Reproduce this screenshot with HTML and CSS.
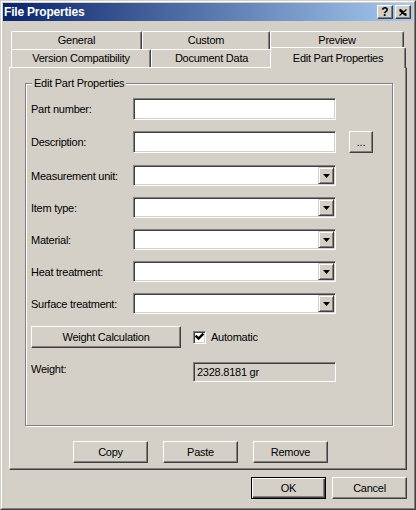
FILE: index.html
```html
<!DOCTYPE html>
<html>
<head>
<meta charset="utf-8">
<title>File Properties</title>
<link rel="stylesheet" href="styles.css">
</head>
<body>
<div class="window">
  <div class="window-inner">
    <div class="titlebar">
      <span class="title">File Properties</span>
      <div class="caption-btns">
        <div class="cap-btn cap-help">?</div>
        <div class="cap-btn cap-close">
          <svg width="8" height="7" viewBox="0 0 8 7"><path d="M0.5 0.5 L7.5 6.5 M1.5 0.5 L7.5 5.5 M0.5 1.5 L6.5 6.5 M7.5 0.5 L0.5 6.5" stroke="#000" stroke-width="1.1" fill="none"/></svg>
        </div>
      </div>
    </div>
    <div class="dialog-body">
      <div class="tabs">
        <div class="tabrow back">
          <div class="tab t-general">General</div>
          <div class="tab t-custom">Custom</div>
          <div class="tab t-preview">Preview</div>
        </div>
        <div class="tabrow front">
          <div class="tab t-version">Version Compatibility</div>
          <div class="tab t-docdata">Document Data</div>
          <div class="tab t-edit selected">Edit Part Properties</div>
        </div>
      </div>
      <div class="panel">
        <div class="group">
          <span class="group-title">Edit Part Properties</span>
          <div class="row r-part">
            <span class="label">Part number:</span>
            <div class="edit"></div>
          </div>
          <div class="row r-desc">
            <span class="label">Description:</span>
            <div class="edit"></div>
            <button class="btn btn-dots">...</button>
          </div>
          <div class="row r-combo r-first-combo">
            <span class="label">Measurement unit:</span>
            <div class="combo"><div class="combo-btn"><svg width="7" height="4" viewBox="0 0 7 4"><path d="M0 0 H7 L3.5 4 Z" fill="#000"/></svg></div></div>
          </div>
          <div class="row r-combo">
            <span class="label">Item type:</span>
            <div class="combo"><div class="combo-btn"><svg width="7" height="4" viewBox="0 0 7 4"><path d="M0 0 H7 L3.5 4 Z" fill="#000"/></svg></div></div>
          </div>
          <div class="row r-combo">
            <span class="label">Material:</span>
            <div class="combo"><div class="combo-btn"><svg width="7" height="4" viewBox="0 0 7 4"><path d="M0 0 H7 L3.5 4 Z" fill="#000"/></svg></div></div>
          </div>
          <div class="row r-combo">
            <span class="label">Heat treatment:</span>
            <div class="combo"><div class="combo-btn"><svg width="7" height="4" viewBox="0 0 7 4"><path d="M0 0 H7 L3.5 4 Z" fill="#000"/></svg></div></div>
          </div>
          <div class="row r-combo">
            <span class="label">Surface treatment:</span>
            <div class="combo"><div class="combo-btn"><svg width="7" height="4" viewBox="0 0 7 4"><path d="M0 0 H7 L3.5 4 Z" fill="#000"/></svg></div></div>
          </div>
          <div class="row r-calc">
            <button class="btn btn-calc">Weight Calculation</button>
            <div class="check">
              <svg width="9" height="9" viewBox="0 0 9 9"><path d="M1.5 3.5 L3.5 5.5 L7.5 1.5" stroke="#000" stroke-width="2.4" fill="none" stroke-linecap="square"/></svg>
            </div>
            <span class="check-label">Automatic</span>
          </div>
          <div class="row r-weight">
            <span class="label weight-label">Weight:</span>
            <div class="readonly">2328.8181 gr</div>
          </div>
        </div>
        <div class="panel-buttons">
          <button class="btn btn-std">Copy</button>
          <button class="btn btn-std">Paste</button>
          <button class="btn btn-std">Remove</button>
        </div>
      </div>
      <div class="dialog-buttons">
        <button class="btn btn-std default">OK</button>
        <button class="btn btn-std">Cancel</button>
      </div>
    </div>
  </div>
</div>
</body>
</html>
```

FILE: styles.css
```css
* { box-sizing: border-box; }
html, body { margin: 0; padding: 0; }
body {
  width: 416px;
  height: 510px;
  background: #d4d0c8;
  font-family: "Liberation Sans", Arial, sans-serif;
  font-size: 11px;
  letter-spacing: -0.25px;
  color: #000;
}

.window {
  width: 416px;
  height: 510px;
  border: 1px solid;
  border-color: #d4d0c8 #404040 #404040 #d4d0c8;
  background: #d4d0c8;
}
.window-inner {
  height: 100%;
  border: 1px solid;
  border-color: #fff #808080 #808080 #fff;
  padding: 1px;
  display: flex;
  flex-direction: column;
}

.titlebar {
  height: 18px;
  display: flex;
  align-items: center;
  justify-content: space-between;
  padding: 0 2px 0 1px;
  background: linear-gradient(to right, #0a246a, #a6caf0);
}
.title {
  color: #fff;
  font-weight: bold;
  font-size: 12px;
  letter-spacing: -0.2px;
}
.caption-btns { display: flex; gap: 2px; }
.cap-btn {
  width: 16px;
  height: 14px;
  background: #d4d0c8;
  border: 1px solid;
  border-color: #fff #404040 #404040 #fff;
  box-shadow: inset -1px -1px #808080;
  display: flex;
  align-items: center;
  justify-content: center;
  font-weight: bold;
  font-size: 12px;
  line-height: 12px;
  letter-spacing: 0;
}

.dialog-body {
  flex: 1;
  padding: 10px 6px 0 6px;
  display: flex;
  flex-direction: column;
}

.tabs { padding-left: 2px; }
.tabrow { display: flex; height: 18px; }
.tab {
  height: 18px;
  border-top: 1px solid #fff;
  border-left: 1px solid #fff;
  border-right: 1px solid #404040;
  box-shadow: inset -1px 0 #808080;
  border-radius: 2px 2px 0 0;
  background: #d4d0c8;
  text-align: center;
  line-height: 16px;
  white-space: nowrap;
}
.t-general { width: 131px; }
.t-custom { width: 128px; }
.t-preview { width: 134px; }
.t-version { width: 140px; }
.t-docdata { width: 121px; }
.t-edit { width: 136px; }
.tab.selected {
  position: relative;
  z-index: 2;
  height: 21px;
  margin-top: -2px;
  margin-left: -2px;
  padding-top: 2px;
}

.panel {
  height: 403px;
  border: 1px solid;
  border-color: #fff #404040 #404040 #fff;
  box-shadow: inset -1px -1px #808080;
  padding: 15px 0 0 15px;
}

.group {
  position: relative;
  width: 368px;
  height: 343px;
  border: 1px solid #808080;
  box-shadow: 1px 1px 0 #fff, inset 1px 1px 0 #fff;
  padding: 14px 0 0 5px;
}
.group-title {
  position: absolute;
  top: -7px;
  left: 6px;
  padding: 0 2px;
  background: #d4d0c8;
  line-height: 13px;
}

.row { display: flex; align-items: center; }
.label { width: 102px; white-space: nowrap; }
.r-desc { margin-top: 11px; }
.r-first-combo { margin-top: 12px !important; }
.r-combo { margin-top: 11px; }
.r-calc { margin-top: 12px; }
.r-weight { margin-top: 14px; align-items: flex-start; }
.weight-label { padding-top: 1px; }

.edit {
  width: 203px;
  height: 22px;
  background: #fff;
  border: 1px solid;
  border-color: #808080 #fff #fff #808080;
  box-shadow: inset 1px 1px #404040, inset -1px -1px #d4d0c8;
}
.combo {
  width: 203px;
  height: 21px;
  background: #fff;
  border: 1px solid;
  border-color: #808080 #fff #fff #808080;
  box-shadow: inset 1px 1px #404040, inset -1px -1px #d4d0c8;
  padding: 1px;
  display: flex;
  justify-content: flex-end;
}
.combo-btn {
  width: 16px;
  height: 17px;
  background: #d4d0c8;
  border: 1px solid;
  border-color: #d4d0c8 #404040 #404040 #d4d0c8;
  box-shadow: inset 1px 1px #fff, inset -1px -1px #808080;
  display: flex;
  align-items: center;
  justify-content: center;
}
.combo-btn svg { display: block; }

.btn {
  margin: 0;
  padding: 0;
  font-family: inherit;
  font-size: 11px;
  letter-spacing: -0.25px;
  color: #000;
  height: 22px;
  background: #d4d0c8;
  border: 1px solid;
  border-color: #fff #404040 #404040 #fff;
  box-shadow: inset -1px -1px #808080;
  border-radius: 0;
}
.btn-dots { width: 24px; margin-left: 13px; }
.btn-calc { width: 150px; }
.btn-std { width: 75px; }
.btn.default {
  border: 1px solid #000;
  box-shadow: inset 1px 1px #fff, inset -1px -1px #404040, inset -2px -2px #808080;
}

.check {
  width: 13px;
  height: 13px;
  margin-left: 12px;
  background: #fff;
  border: 1px solid;
  border-color: #808080 #fff #fff #808080;
  box-shadow: inset 1px 1px #404040, inset -1px -1px #d4d0c8;
  padding: 1px;
}
.check svg { display: block; }
.check-label { margin-left: 5px; }

.readonly {
  width: 143px;
  height: 20px;
  margin-left: 60px;
  background: #d4d0c8;
  border: 1px solid;
  border-color: #808080 #fff #fff #808080;
  box-shadow: inset 1px 1px #404040;
  padding-left: 3px;
  line-height: 18px;
}
.weight-label { width: 102px; }

.panel-buttons {
  display: flex;
  gap: 15px;
  margin-top: 15px;
  padding-left: 48px;
}
.dialog-buttons {
  display: flex;
  justify-content: flex-end;
  gap: 6px;
  margin-top: 7px;
}
```
